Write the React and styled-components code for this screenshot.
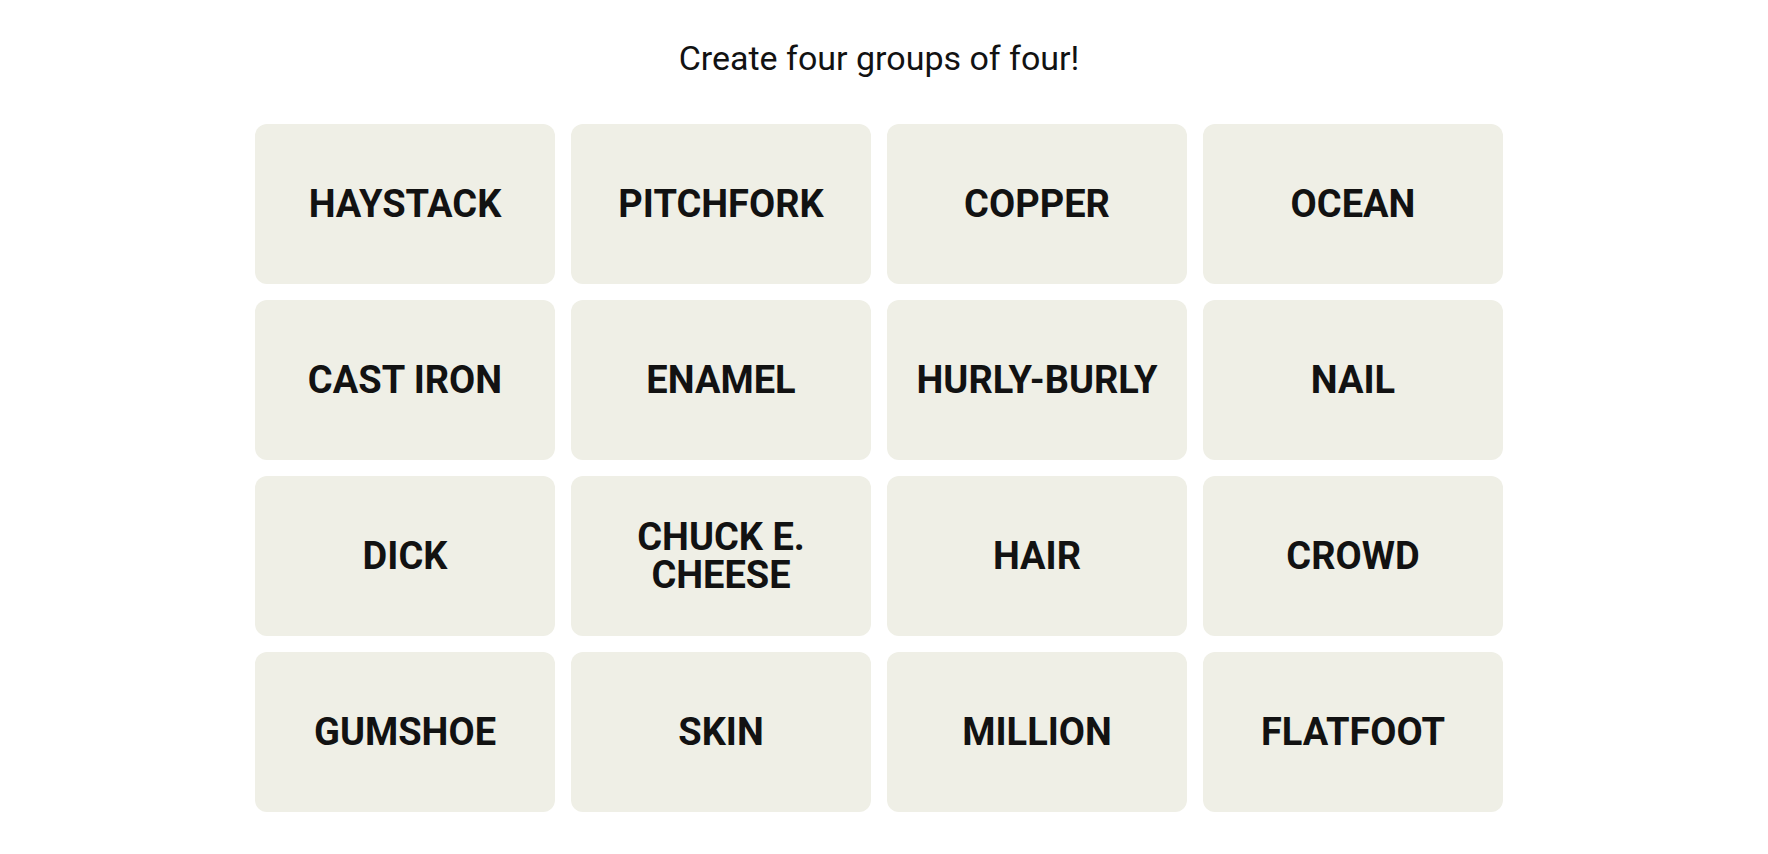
import React from 'react'
import styled, { createGlobalStyle } from 'styled-components'

const GlobalStyle = createGlobalStyle`
body {
    margin: 0;
    background: #ffffff;
    font-family: Roboto, "Liberation Sans", sans-serif;
    color: #121212;
}
`

const Page = styled.main`
width: 1758px;
display: flex;
flex-direction: column;
align-items: center;
padding-top: 38px;
`

const Heading = styled.p`
margin: 0 0 46px;
font-size: 34px;
line-height: 40px;
font-weight: 400;
color: #121212;
`

const Board = styled.div`
display: grid;
grid-template-columns: repeat(4, 300px);
grid-auto-rows: 160px;
gap: 16px;
`

const Tile = styled.button`
display: flex;
align-items: center;
justify-content: center;
padding: 0 20px;
border: none;
border-radius: 12px;
background: ${props => props.selected ? '#5a594e' : '#efefe6'};
color: ${props => props.selected ? '#ffffff' : '#121212'};
font-family: Roboto, "Liberation Sans", sans-serif;
font-weight: 700;
font-size: 38px;
line-height: 38px;
text-transform: uppercase;
text-align: center;
cursor: pointer;
`

const words = [
    'Haystack', 'Pitchfork', 'Copper', 'Ocean',
    'Cast Iron', 'Enamel', 'Hurly-Burly', 'Nail',
    'Dick', 'Chuck E. Cheese', 'Hair', 'Crowd',
    'Gumshoe', 'Skin', 'Million', 'Flatfoot',
]

function App() {
    return (
        <>
            <GlobalStyle />
            <Page>
                <Heading>Create four groups of four!</Heading>
                <Board>
                    {words.map(word => (
                        <Tile key={word}>{word}</Tile>
                    ))}
                </Board>
            </Page>
        </>
    )
}

export default App
